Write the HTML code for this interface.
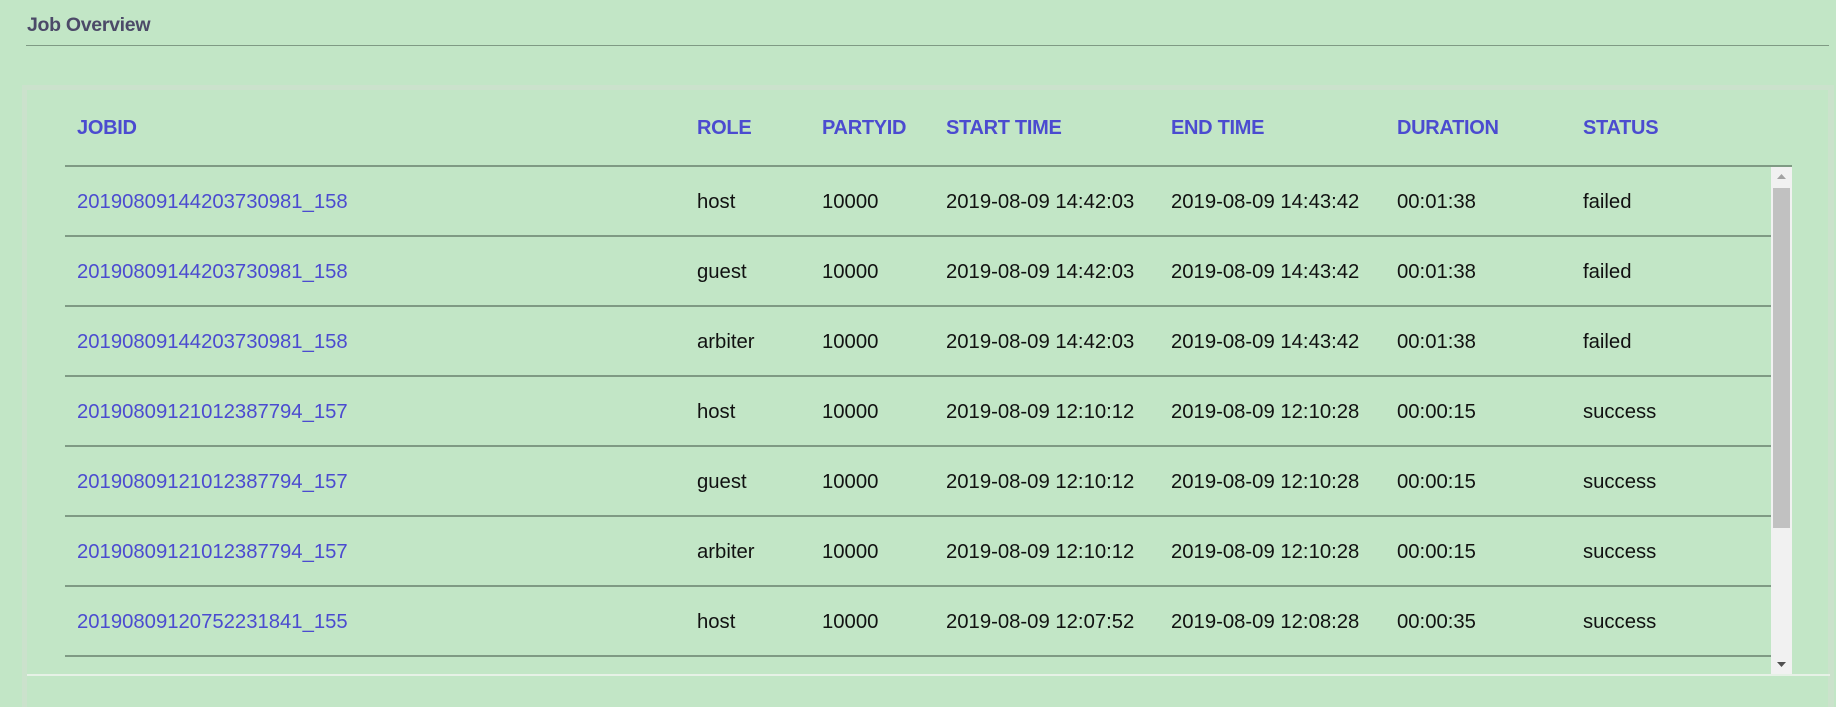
<!DOCTYPE html>
<html><head><style>
html,body{margin:0;padding:0;width:1836px;height:707px;overflow:hidden;background:#c2e6c6;font-family:"Liberation Sans",sans-serif;}
.title{position:absolute;left:27px;top:14px;font-size:19.5px;font-weight:bold;color:#4c4a68;letter-spacing:-0.3px}
.tline{position:absolute;left:26px;top:45px;width:1803px;height:1px;background:#7f9a84}
.panel{position:absolute;left:22px;top:85px;width:1812px;height:622px;box-sizing:border-box;border:5px solid #cbe2cc;border-right-width:6px;border-bottom:none;background:#c2e6c6}
.hd{position:absolute;top:117px;font-size:20px;font-weight:bold;color:#4b4bd0;letter-spacing:-0.3px}
.hline{position:absolute;left:65px;top:165px;width:1727px;height:2px;background:#7f9a84}
.row{position:absolute;left:65px;width:1706px;height:70px}
.row .l{position:absolute;left:0;bottom:0;width:100%;height:2px;background:#7f9a84}
.c{position:absolute;top:24px;font-size:20.3px;color:#111;white-space:nowrap}
.c.j{color:#4b4bd0}
.sb{position:absolute;left:1771px;top:167px;width:21px;height:508px;background:#f1f1f1}
.thumb{position:absolute;left:2px;top:21px;width:17px;height:340px;background:#c1c1c1}
.bline{position:absolute;left:27px;top:674px;width:1803px;height:2px;background:#e6f1e6}
</style></head><body>
<div class="title">Job Overview</div>
<div class="tline"></div>
<div class="panel"></div>
<div class="hd" style="left:77px">JOBID</div>
<div class="hd" style="left:697px">ROLE</div>
<div class="hd" style="left:822px">PARTYID</div>
<div class="hd" style="left:946px">START TIME</div>
<div class="hd" style="left:1171px">END TIME</div>
<div class="hd" style="left:1397px">DURATION</div>
<div class="hd" style="left:1583px">STATUS</div>
<div class="hline"></div>

<div class="row" style="top:167px"><span class="c j" style="left:12px">20190809144203730981_158</span><span class="c" style="left:632px">host</span><span class="c" style="left:757px">10000</span><span class="c" style="left:881px">2019-08-09 14:42:03</span><span class="c" style="left:1106px">2019-08-09 14:43:42</span><span class="c" style="left:1332px">00:01:38</span><span class="c" style="left:1518px">failed</span><div class="l"></div></div>
<div class="row" style="top:237px"><span class="c j" style="left:12px">20190809144203730981_158</span><span class="c" style="left:632px">guest</span><span class="c" style="left:757px">10000</span><span class="c" style="left:881px">2019-08-09 14:42:03</span><span class="c" style="left:1106px">2019-08-09 14:43:42</span><span class="c" style="left:1332px">00:01:38</span><span class="c" style="left:1518px">failed</span><div class="l"></div></div>
<div class="row" style="top:307px"><span class="c j" style="left:12px">20190809144203730981_158</span><span class="c" style="left:632px">arbiter</span><span class="c" style="left:757px">10000</span><span class="c" style="left:881px">2019-08-09 14:42:03</span><span class="c" style="left:1106px">2019-08-09 14:43:42</span><span class="c" style="left:1332px">00:01:38</span><span class="c" style="left:1518px">failed</span><div class="l"></div></div>
<div class="row" style="top:377px"><span class="c j" style="left:12px">20190809121012387794_157</span><span class="c" style="left:632px">host</span><span class="c" style="left:757px">10000</span><span class="c" style="left:881px">2019-08-09 12:10:12</span><span class="c" style="left:1106px">2019-08-09 12:10:28</span><span class="c" style="left:1332px">00:00:15</span><span class="c" style="left:1518px">success</span><div class="l"></div></div>
<div class="row" style="top:447px"><span class="c j" style="left:12px">20190809121012387794_157</span><span class="c" style="left:632px">guest</span><span class="c" style="left:757px">10000</span><span class="c" style="left:881px">2019-08-09 12:10:12</span><span class="c" style="left:1106px">2019-08-09 12:10:28</span><span class="c" style="left:1332px">00:00:15</span><span class="c" style="left:1518px">success</span><div class="l"></div></div>
<div class="row" style="top:517px"><span class="c j" style="left:12px">20190809121012387794_157</span><span class="c" style="left:632px">arbiter</span><span class="c" style="left:757px">10000</span><span class="c" style="left:881px">2019-08-09 12:10:12</span><span class="c" style="left:1106px">2019-08-09 12:10:28</span><span class="c" style="left:1332px">00:00:15</span><span class="c" style="left:1518px">success</span><div class="l"></div></div>
<div class="row" style="top:587px"><span class="c j" style="left:12px">20190809120752231841_155</span><span class="c" style="left:632px">host</span><span class="c" style="left:757px">10000</span><span class="c" style="left:881px">2019-08-09 12:07:52</span><span class="c" style="left:1106px">2019-08-09 12:08:28</span><span class="c" style="left:1332px">00:00:35</span><span class="c" style="left:1518px">success</span><div class="l"></div></div>

<div class="sb"><div class="thumb"></div>
<svg style="position:absolute;left:6px;top:7px" width="9" height="5"><polygon points="0,5 9,5 4.5,0" fill="#a3a3a3"/></svg>
<svg style="position:absolute;left:6px;top:495px" width="9" height="5"><polygon points="0,0 9,0 4.5,5" fill="#505050"/></svg>
</div>
<div class="bline"></div>
</body></html>
